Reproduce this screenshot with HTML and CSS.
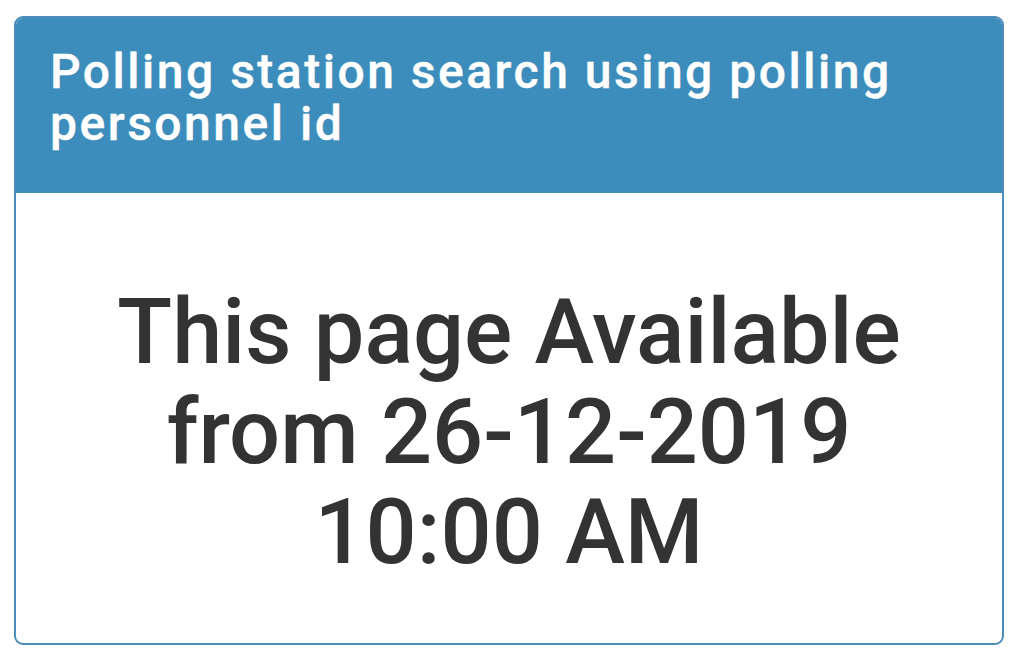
FILE: index.html
```html
<!DOCTYPE html>
<html lang="en">
<head>
<meta charset="utf-8">
<title>Polling station search</title>
<link rel="stylesheet" href="styles.css">
</head>
<body>
<div class="page">
  <div class="box">
    <div class="box-header">
      <h3 class="box-title">Polling station search using polling personnel id</h3>
    </div>
    <div class="box-body">
      <h1 class="notice">This page Available from 26-12-2019 10:00 AM</h1>
    </div>
  </div>
</div>
</body>
</html>
```
FILE: styles.css
```css
* { box-sizing: border-box; }
html, body { margin: 0; padding: 0; background: #ffffff; }
body { font-family: Roboto, "Noto Sans", "Liberation Sans", sans-serif; color: #333333; }
.page { padding: 16px 22px 8px 14px; }
.box {
  border: 2.5px solid #4b8cb8;
  border-radius: 9px;
  overflow: hidden;
  height: 629px;
  display: flex;
  flex-direction: column;
}
.box-header {
  background: #3d8dbc;
  color: #ffffff;
  height: 175px;
  padding: 28px 60px 0 34px;
}
.box-title {
  margin: 0;
  font-size: 48px;
  font-weight: 500;
  line-height: 52px;
  letter-spacing: 2.5px;
  -webkit-text-stroke: 0.4px #ffffff;
}
.box-body {
  flex: 1;
  display: flex;
  flex-direction: column;
  align-items: center;
  padding: 90px 60px 0;
}
.notice {
  margin: 0;
  font-size: 90px;
  font-weight: 500;
  line-height: 100px;
  text-align: center;
  max-width: 820px;
}
```
